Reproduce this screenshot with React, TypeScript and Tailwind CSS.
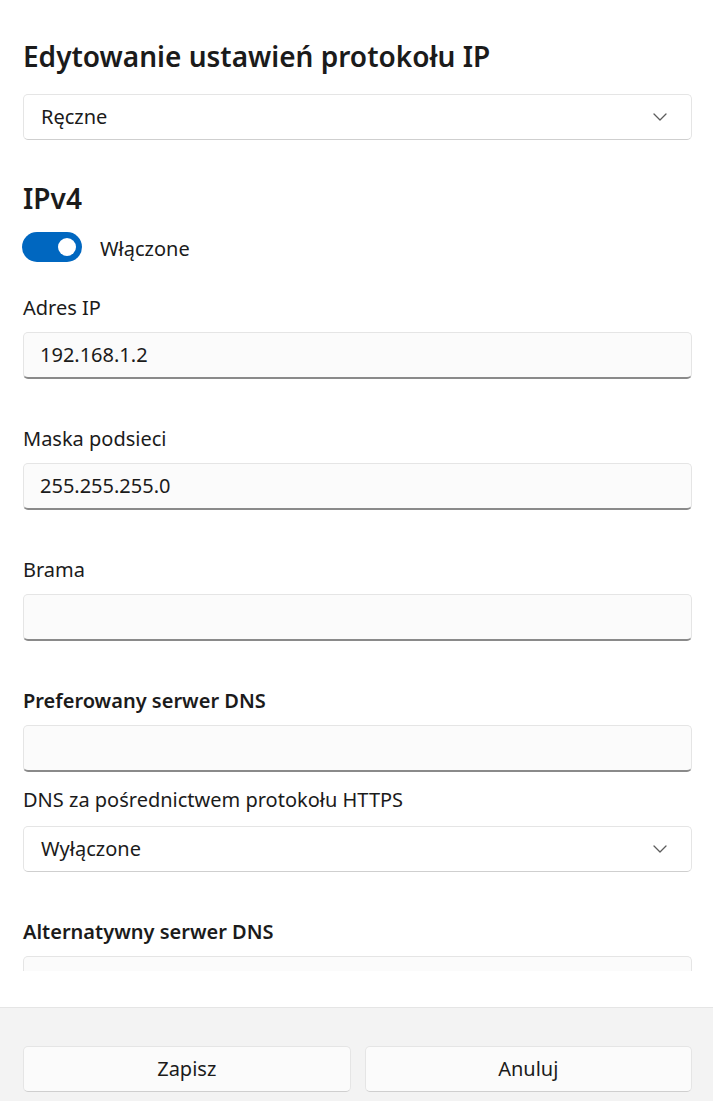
import React from "react";

const font = { fontFamily: '"Noto Sans", "Open Sans", Arial, sans-serif' };

function Chevron() {
  return (
    <svg width="14" height="8" viewBox="0 0 14 8" fill="none" className="shrink-0">
      <polyline points="1,1 7,7 13,1" stroke="#5c5c5c" strokeWidth="1.3" strokeLinejoin="round" strokeLinecap="round" />
    </svg>
  );
}

function Select({ value }: { value: string }) {
  return (
    <div className="flex h-[46px] items-center justify-between rounded-[5px] border border-[#e5e5e5] border-b-[#cfcfcf] bg-white pl-[17px] pr-[24px] text-[20px] text-[#1b1b1b]">
      <span>{value}</span>
      <Chevron />
    </div>
  );
}

function Field({ label, value, bold }: { label: string; value?: string; bold?: boolean }) {
  return (
    <div className="flex flex-col">
      <div className={`h-[28px] text-[20px] leading-[28px] text-[#1b1b1b] ${bold ? "font-semibold" : ""}`}>{label}</div>
      <div className="mt-[10px] flex h-[47px] items-center rounded-[5px] border border-[#e5e5e5] border-b-2 border-b-[#8a8a8a] bg-[#fbfbfb] px-[16px] text-[20px] text-[#1b1b1b]">
        {value}
      </div>
    </div>
  );
}

export default function App() {
  return (
    <div className="h-[1101px] w-[713px] overflow-hidden bg-white" style={font}>
      {/* scroll area */}
      <div className="h-[971px] overflow-hidden pl-[23px] pr-[21px] pt-[38px]">
        <h1 className="h-[36px] text-[28px] font-semibold leading-[36px] text-[#1b1b1b]">Edytowanie ustawień protokołu IP</h1>
        <div className="mt-[20px]">
          <Select value="Ręczne" />
        </div>

        <h2 className="mt-[40px] h-[36px] text-[28px] font-semibold leading-[36px] text-[#1b1b1b]">IPv4</h2>
        <div className="mt-[16px] flex h-[30px] items-center">
          <div className="-ml-px flex h-[30px] w-[60px] items-center justify-end rounded-full bg-[#0067c0] pr-[6px]">
            <div className="h-[18px] w-[18px] rounded-full bg-white" />
          </div>
          <span className="ml-[18px] pt-[3px] text-[20px] leading-[28px] text-[#1b1b1b]">Włączone</span>
        </div>

        <div className="mt-[32px] flex flex-col gap-[46px]">
          <Field label="Adres IP" value="192.168.1.2" />
          <Field label="Maska podsieci" value="255.255.255.0" />
          <Field label="Brama" />
          <div className="flex flex-col">
            <Field label="Preferowany serwer DNS" bold />
            <div className="mt-[14px] h-[28px] text-[20px] leading-[28px] text-[#1b1b1b]">DNS za pośrednictwem protokołu HTTPS</div>
            <div className="mt-[12px]">
              <Select value="Wyłączone" />
            </div>
          </div>
          <Field label="Alternatywny serwer DNS" bold />
        </div>
      </div>

      <div className="h-[36px]" />

      {/* footer */}
      <div className="flex h-[94px] gap-[14px] border-t border-[#e5e5e5] bg-[#f3f3f3] pl-[23px] pr-[21px] pt-[38px]">
        <button className="flex h-[46px] flex-1 items-center justify-center rounded-[5px] border border-[#e5e5e5] border-b-[#cfcfcf] bg-[#fbfbfb] text-[20px] text-[#1b1b1b]">
          Zapisz
        </button>
        <button className="flex h-[46px] flex-1 items-center justify-center rounded-[5px] border border-[#e5e5e5] border-b-[#cfcfcf] bg-[#fbfbfb] text-[20px] text-[#1b1b1b]">
          Anuluj
        </button>
      </div>
    </div>
  );
}
